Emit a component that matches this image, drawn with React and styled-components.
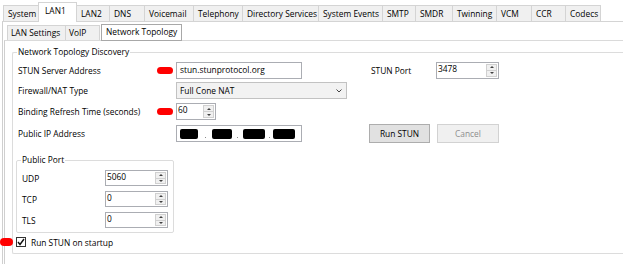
import React from "react";
import styled, { createGlobalStyle } from "styled-components";

const GlobalStyle = createGlobalStyle`
	html, body {
		margin: 0;
		padding: 0;
		background: #fff;
		overflow: hidden;
	}
	body {
		font-family: "Open Sans", "Noto Sans", sans-serif;
		font-size: 8.4px;
		color: #000;
	}
`;

const Window = styled.div`
	width: 623px;
	height: 264px;
	padding-top: 2px;
	box-sizing: border-box;
	overflow: hidden;
`;

const TabStrip = styled.div`
	display: flex;
	align-items: flex-end;
	height: 19px;
	padding-left: 3px;
`;

const Tab = styled.div`
	position: relative;
	box-sizing: border-box;
	width: ${(p) => p.$w}px;
	height: ${(p) => (p.$active ? 20 : 16)}px;
	margin-right: -1px;
	margin-bottom: ${(p) => (p.$active ? -1 : 0)}px;
	padding-left: ${(p) => (p.$active ? 6 : 4)}px;
	line-height: ${(p) => (p.$active ? 16 : 15)}px;
	background: ${(p) => (p.$active ? "#fff" : "#f0f0f0")};
	border: 1px solid #d4d4d4;
	border-bottom: none;
	z-index: ${(p) => (p.$active ? 1 : 0)};
	white-space: nowrap;
`;

const Panel = styled.div`
	margin-left: 2px;
	height: 245px;
	border-left: 1px solid #cfcfcf;
	border-top: 1px solid #d4d4d4;
	padding-top: 2px;
	box-sizing: border-box;
`;

const SubTabStrip = styled.div`
	display: flex;
	align-items: flex-end;
	height: 16px;
	padding-left: 4px;
`;

const SubTab = styled.div`
	box-sizing: border-box;
	width: ${(p) => p.$w}px;
	height: ${(p) => (p.$active ? 17 : 15)}px;
	margin-right: ${(p) => (p.$gap ? 1 : -1)}px;
	margin-bottom: ${(p) => (p.$active ? -1 : 0)}px;
	padding-left: ${(p) => (p.$active ? 4 : 3)}px;
	line-height: 14px;
	background: ${(p) => (p.$active ? "#fff" : "#f0f0f0")};
	border: 1px solid ${(p) => (p.$active ? "#a8a8a8" : "#d4d4d4")};
	border-bottom: ${(p) => (p.$active ? "1px solid #a8a8a8" : "none")};
	white-space: nowrap;
`;

const SubPanel = styled.div`
	margin-left: 1px;
	height: 226px;
	border-left: 1px solid #cfcfcf;
	border-top: 1px solid #dadada;
	padding: 5px 0 0 7px;
	box-sizing: border-box;
`;

const GroupBox = styled.fieldset`
	margin: 0 0 0 ${(p) => p.$shift || 0}px;
	width: ${(p) => p.$w}px;
	box-sizing: border-box;
	padding: 4px ${(p) => p.$pr || 0}px ${(p) => p.$pb}px 5px;
	border: 1px solid #dcdcdc;
	border-right: ${(p) => (p.$open ? "none" : "1px solid #dcdcdc")};
	border-radius: ${(p) => (p.$open ? "2px 0 0 2px" : "2px")};
	min-width: 0;
`;

const Legend = styled.legend`
	padding: 0 1px;
	margin-left: -1px;
	line-height: 12px;
`;

const FormGrid = styled.div`
	display: grid;
	grid-template-columns: 139px 19px 171px 22px 67px 63px;
	grid-template-rows: 16px 17px 17px 19px;
	row-gap: 4px;
	align-items: center;
`;

const Label = styled.div`
	grid-column: ${(p) => p.$col || 1};
	padding-left: ${(p) => p.$pl || 0}px;
	white-space: nowrap;
`;

const Marker = styled.span`
	display: block;
	width: 16px;
	height: 7px;
	border-radius: 4px;
	background: #ff0000;
`;

const TextBox = styled.div`
	box-sizing: border-box;
	width: ${(p) => p.$w}px;
	height: ${(p) => p.$h || 17}px;
	border: 1px solid #abadb3;
	background: #fff;
	padding-left: ${(p) => p.$pl || 3}px;
	line-height: ${(p) => (p.$h || 17) - 3}px;
	white-space: nowrap;
	overflow: hidden;
`;

const SpinBox = styled.div`
	display: flex;
	box-sizing: border-box;
	width: ${(p) => p.$w}px;
	height: ${(p) => p.$h || 17}px;
	border: 1px solid #abadb3;
	background: #fff;
`;

const SpinValue = styled.div`
	flex: 1;
	padding-left: 1px;
	line-height: 12px;
`;

const SpinButtons = styled.div`
	display: flex;
	flex-direction: column;
	width: 11px;
	margin: 1px;
	border: 1px solid #d0d0d0;
	box-sizing: border-box;
`;

const SpinButton = styled.div`
	flex: 1;
	display: flex;
	align-items: center;
	justify-content: center;
	background: #f0f0f0;
	& + & {
		border-top: 1px solid #d0d0d0;
	}
	&::after {
		content: "";
		border-left: 2px solid transparent;
		border-right: 2px solid transparent;
		${(p) =>
			p.$down
				? "border-top: 2px solid #404040;"
				: "border-bottom: 2px solid #404040;"}
	}
`;

const Select = styled.div`
	display: flex;
	align-items: center;
	justify-content: space-between;
	box-sizing: border-box;
	width: 171px;
	height: 17px;
	padding: 0 4px 0 3px;
	border: 1px solid #c2c2c2;
	background: #f2f2f2;
`;

const IpBox = styled(TextBox)`
	display: flex;
	align-items: center;
	padding-left: 3px;
`;

const IpPart = styled.span`
	display: block;
	width: ${(p) => p.$w}px;
	height: 10px;
	border-radius: 2px;
	background: #000;
`;

const IpDot = styled.span`
	display: flex;
	justify-content: center;
	align-items: flex-end;
	width: ${(p) => p.$w}px;
	height: 9px;
	&::after {
		content: "";
		width: 1px;
		height: 1px;
		background: #8a8a8a;
	}
`;

const ButtonRow = styled.div`
	grid-column: 5 / 7;
	display: flex;
	gap: 7px;
`;

const Button = styled.div`
	box-sizing: border-box;
	width: ${(p) => p.$w}px;
	height: 19px;
	line-height: 17px;
	text-align: center;
	border: 1px solid ${(p) => (p.$disabled ? "#d2d2d2" : "#adadad")};
	background: ${(p) => (p.$disabled ? "#f0f0f0" : "#e1e1e1")};
	color: ${(p) => (p.$disabled ? "#8d8d8d" : "#000")};
`;

const PortSection = styled.div`
	margin-top: 11px;
`;

const PortGrid = styled.div`
	display: grid;
	grid-template-columns: 83px 63px;
	grid-template-rows: 16px 16px 16px;
	row-gap: 5px;
	align-items: center;
`;

const CheckRow = styled.div`
	position: relative;
	display: flex;
	align-items: center;
	gap: 5px;
	margin: 4px 0 0 -2px;
	height: 10px;
`;

const CheckBox = styled.span`
	display: flex;
	align-items: center;
	justify-content: center;
	box-sizing: border-box;
	width: 10px;
	height: 10px;
	border: 1px solid #333;
	background: #fff;
`;

const SideMarker = styled(Marker)`
	position: absolute;
	left: -16px;
	top: 1px;
	width: 13px;
	height: 8px;
`;

const mainTabs = [
	["System", 36],
	["LAN1", 39, true],
	["LAN2", 34],
	["DNS", 36],
	["Voicemail", 50],
	["Telephony", 50],
	["Directory Services", 77],
	["System Events", 65],
	["SMTP", 34],
	["SMDR", 38],
	["Twinning", 45],
	["VCM", 36],
	["CCR", 35],
	["Codecs", 36],
];

const ports = [
	["UDP", "5060"],
	["TCP", "0"],
	["TLS", "0"],
];

function Spinner({ value, w, h }) {
	return (
		<SpinBox $w={w} $h={h}>
			<SpinValue>{value}</SpinValue>
			<SpinButtons>
				<SpinButton />
				<SpinButton $down />
			</SpinButtons>
		</SpinBox>
	);
}

export default function App() {
	return (
		<>
			<GlobalStyle />
			<Window>
				<TabStrip>
					{mainTabs.map(([name, w, active]) => (
						<Tab key={name} $w={w} $active={active}>
							{name}
						</Tab>
					))}
				</TabStrip>
				<Panel>
					<SubTabStrip>
						<SubTab $w={59}>LAN Settings</SubTab>
						<SubTab $w={35} $gap>
							VoIP
						</SubTab>
						<SubTab $w={81} $active>
							Network Topology
						</SubTab>
					</SubTabStrip>
					<SubPanel>
						<GroupBox $w={611} $pb={6} $open>
							<Legend>Network Topology Discovery</Legend>
							<FormGrid>
								<Label>STUN Server Address</Label>
								<Marker />
								<TextBox $w={126}>stun.stunprotocol.org</TextBox>
								<Label $col={5} $pl={2}>
									STUN Port
								</Label>
								<Spinner value="3478" w={63} />

								<Label>Firewall/NAT Type</Label>
								<span />
								<Select>
									<span>Full Cone NAT</span>
									<svg width="6" height="4" viewBox="0 0 6 4">
										<polyline
											points="0.5,0.5 3,3 5.5,0.5"
											fill="none"
											stroke="#444"
											strokeWidth="1"
										/>
									</svg>
								</Select>

								<Label>Binding Refresh Time (seconds)</Label>
								<Marker />
								<Spinner value="60" w={40} />

								<Label>Public IP Address</Label>
								<span />
								<IpBox $w={126}>
									<IpPart $w={18} />
									<IpDot $w={14} />
									<IpPart $w={20} />
									<IpDot $w={11} />
									<IpPart $w={22} />
									<IpDot $w={8} />
									<IpPart $w={22} />
								</IpBox>
								<ButtonRow>
									<Button $w={61}>Run STUN</Button>
									<Button $w={62} $disabled>
										Cancel
									</Button>
								</ButtonRow>
							</FormGrid>

							<PortSection>
								<GroupBox $w={158} $shift={-2} $pr={4} $pb={4}>
									<Legend>Public Port</Legend>
									<PortGrid>
										{ports.map(([name, value]) => (
											<React.Fragment key={name}>
												<Label>{name}</Label>
												<Spinner value={value} w={63} h={16} />
											</React.Fragment>
										))}
									</PortGrid>
								</GroupBox>
							</PortSection>

							<CheckRow>
								<SideMarker />
								<CheckBox>
									<svg width="8" height="8" viewBox="0 0 8 8">
										<polyline
											points="1,4 3,6.5 7,1"
											fill="none"
											stroke="#111"
											strokeWidth="1.4"
										/>
									</svg>
								</CheckBox>
								<span>Run STUN on startup</span>
							</CheckRow>
						</GroupBox>
					</SubPanel>
				</Panel>
			</Window>
		</>
	);
}
